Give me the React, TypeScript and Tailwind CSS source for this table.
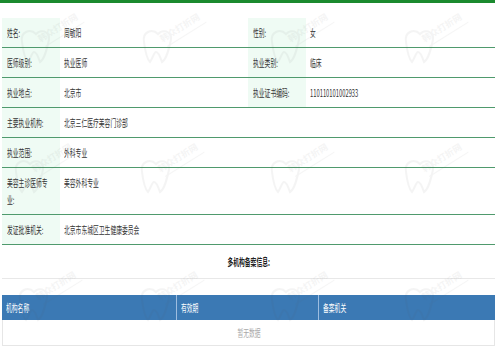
import React from "react";

const T = ({ children, center = false, className = "" }: { children: React.ReactNode; center?: boolean; className?: string }) => (
  <span
    className={
      (center ? "origin-center " : "origin-left ") +
      "inline-block whitespace-nowrap scale-x-[0.58] " +
      className
    }
  >
    {children}
  </span>
);

const Label = ({ children, w = "w-[58px]" }: { children: React.ReactNode; w?: string }) => (
  <div className={w + " shrink-0 bg-[#effbf4] px-[5px] py-[6px] text-[#333]"}>{children}</div>
);

const Value = ({ children, w }: { children?: React.ReactNode; w: string }) => (
  <div className={w + " shrink-0 px-[4px] py-[6px] text-[#333]"}>{children}</div>
);

const Mark = () => (
  <div className="w-[90px] h-[70px] opacity-[0.06]">
    <svg width="90" height="70" viewBox="0 0 90 70">
      <g transform="rotate(-32 40 30)">
        <text x="24" y="30" fontSize="9" fontWeight="700" fill="#555" fontFamily="Noto Sans CJK SC, sans-serif">
          韩众打折网
        </text>
        <line x1="26" y1="36" x2="72" y2="36" stroke="#666" strokeWidth="1" />
      </g>
      <path
        d="M8 38 C6 28 16 24 22 30 C28 24 38 28 34 40 C32 48 30 56 26 58 C24 52 22 48 20 48 C18 48 17 54 14 58 C10 54 9 46 8 38 Z"
        fill="none"
        stroke="#555"
        strokeWidth="2"
      />
    </svg>
  </div>
);

export default function App() {
  return (
    <div
      className="relative w-[500px] h-[360px] bg-white overflow-hidden text-[10px] leading-[17px]"
      style={{ fontFamily: '"Noto Sans CJK SC", "Microsoft YaHei", sans-serif' }}
    >
      <div className="h-[3px] w-[495px] bg-[#1b8a2f]" />
      <div className="mt-[15px] ml-[2px] w-[493px]">
        <div className="flex border-b border-[#4f9a6d]">
          <Label>
            <T>姓名:</T>
          </Label>
          <Value w="w-[188px]">
            <T>周敏阳</T>
          </Value>
          <Label>
            <T>性别:</T>
          </Label>
          <Value w="w-[189px]">
            <T>女</T>
          </Value>
        </div>
        <div className="flex border-b border-[#4f9a6d]">
          <Label>
            <T>医师级别:</T>
          </Label>
          <Value w="w-[188px]">
            <T>执业医师</T>
          </Value>
          <Label>
            <T>执业类别:</T>
          </Label>
          <Value w="w-[189px]">
            <T>临床</T>
          </Value>
        </div>
        <div className="flex border-b border-[#4f9a6d]">
          <Label>
            <T>执业地点:</T>
          </Label>
          <Value w="w-[188px]">
            <T>北京市</T>
          </Value>
          <Label>
            <T>执业证书编码:</T>
          </Label>
          <Value w="w-[189px]">
            <T>110110101002933</T>
          </Value>
        </div>
        <div className="flex border-b border-[#4f9a6d]">
          <Label>
            <T>主要执业机构:</T>
          </Label>
          <Value w="w-[435px]">
            <T>北京三仁医疗美容门诊部</T>
          </Value>
        </div>
        <div className="flex border-b border-[#4f9a6d]">
          <Label>
            <T>执业范围:</T>
          </Label>
          <Value w="w-[435px]">
            <T>外科专业</T>
          </Value>
        </div>
        <div className="flex border-b border-[#4f9a6d]">
          <Label>
            <span className="block">
              <T>美容主诊医师专</T>
            </span>
            <span className="block">
              <T>业:</T>
            </span>
          </Label>
          <Value w="w-[435px]">
            <T>美容外科专业</T>
          </Value>
        </div>
        <div className="flex border-b border-[#4f9a6d]">
          <Label>
            <T>发证批准机关:</T>
          </Label>
          <Value w="w-[435px]">
            <T>北京市东城区卫生健康委员会</T>
          </Value>
        </div>
        <div className="h-[34px] flex items-center justify-center border-b border-[#e8e8e8] font-bold text-[#222]">
          <T center>多机构备案信息:</T>
        </div>
        <div className="mt-[16px] border border-[#e6e6e6] border-t-0">
          <div className="flex h-[25px] items-center bg-[#3b79b4] text-white -mx-px">
            <div className="w-[175px] h-full flex items-center px-[4px] border-r border-[#9dbde0]">
              <T>机构名称</T>
            </div>
            <div className="w-[142px] h-full flex items-center px-[4px] border-r border-[#9dbde0]">
              <T>有效期</T>
            </div>
            <div className="flex-1 h-full flex items-center px-[4px]">
              <T>备案机关</T>
            </div>
          </div>
          <div className="h-[25px] flex items-center justify-center text-[#aaa]">
            <T center>暂无数据</T>
          </div>
        </div>
      </div>
      <div className="pointer-events-none absolute inset-0">
        <div className="absolute left-[14px] top-[4px]"><Mark /></div>
        <div className="absolute left-[136px] top-[4px]"><Mark /></div>
        <div className="absolute left-[264px] top-[4px]"><Mark /></div>
        <div className="absolute left-[398px] top-[4px]"><Mark /></div>
        <div className="absolute left-[8px] top-[134px]"><Mark /></div>
        <div className="absolute left-[134px] top-[134px]"><Mark /></div>
        <div className="absolute left-[264px] top-[134px]"><Mark /></div>
        <div className="absolute left-[398px] top-[134px]"><Mark /></div>
        <div className="absolute left-[12px] top-[262px]"><Mark /></div>
        <div className="absolute left-[134px] top-[262px]"><Mark /></div>
        <div className="absolute left-[264px] top-[262px]"><Mark /></div>
        <div className="absolute left-[398px] top-[262px]"><Mark /></div>
      </div>
    </div>
  );
}
